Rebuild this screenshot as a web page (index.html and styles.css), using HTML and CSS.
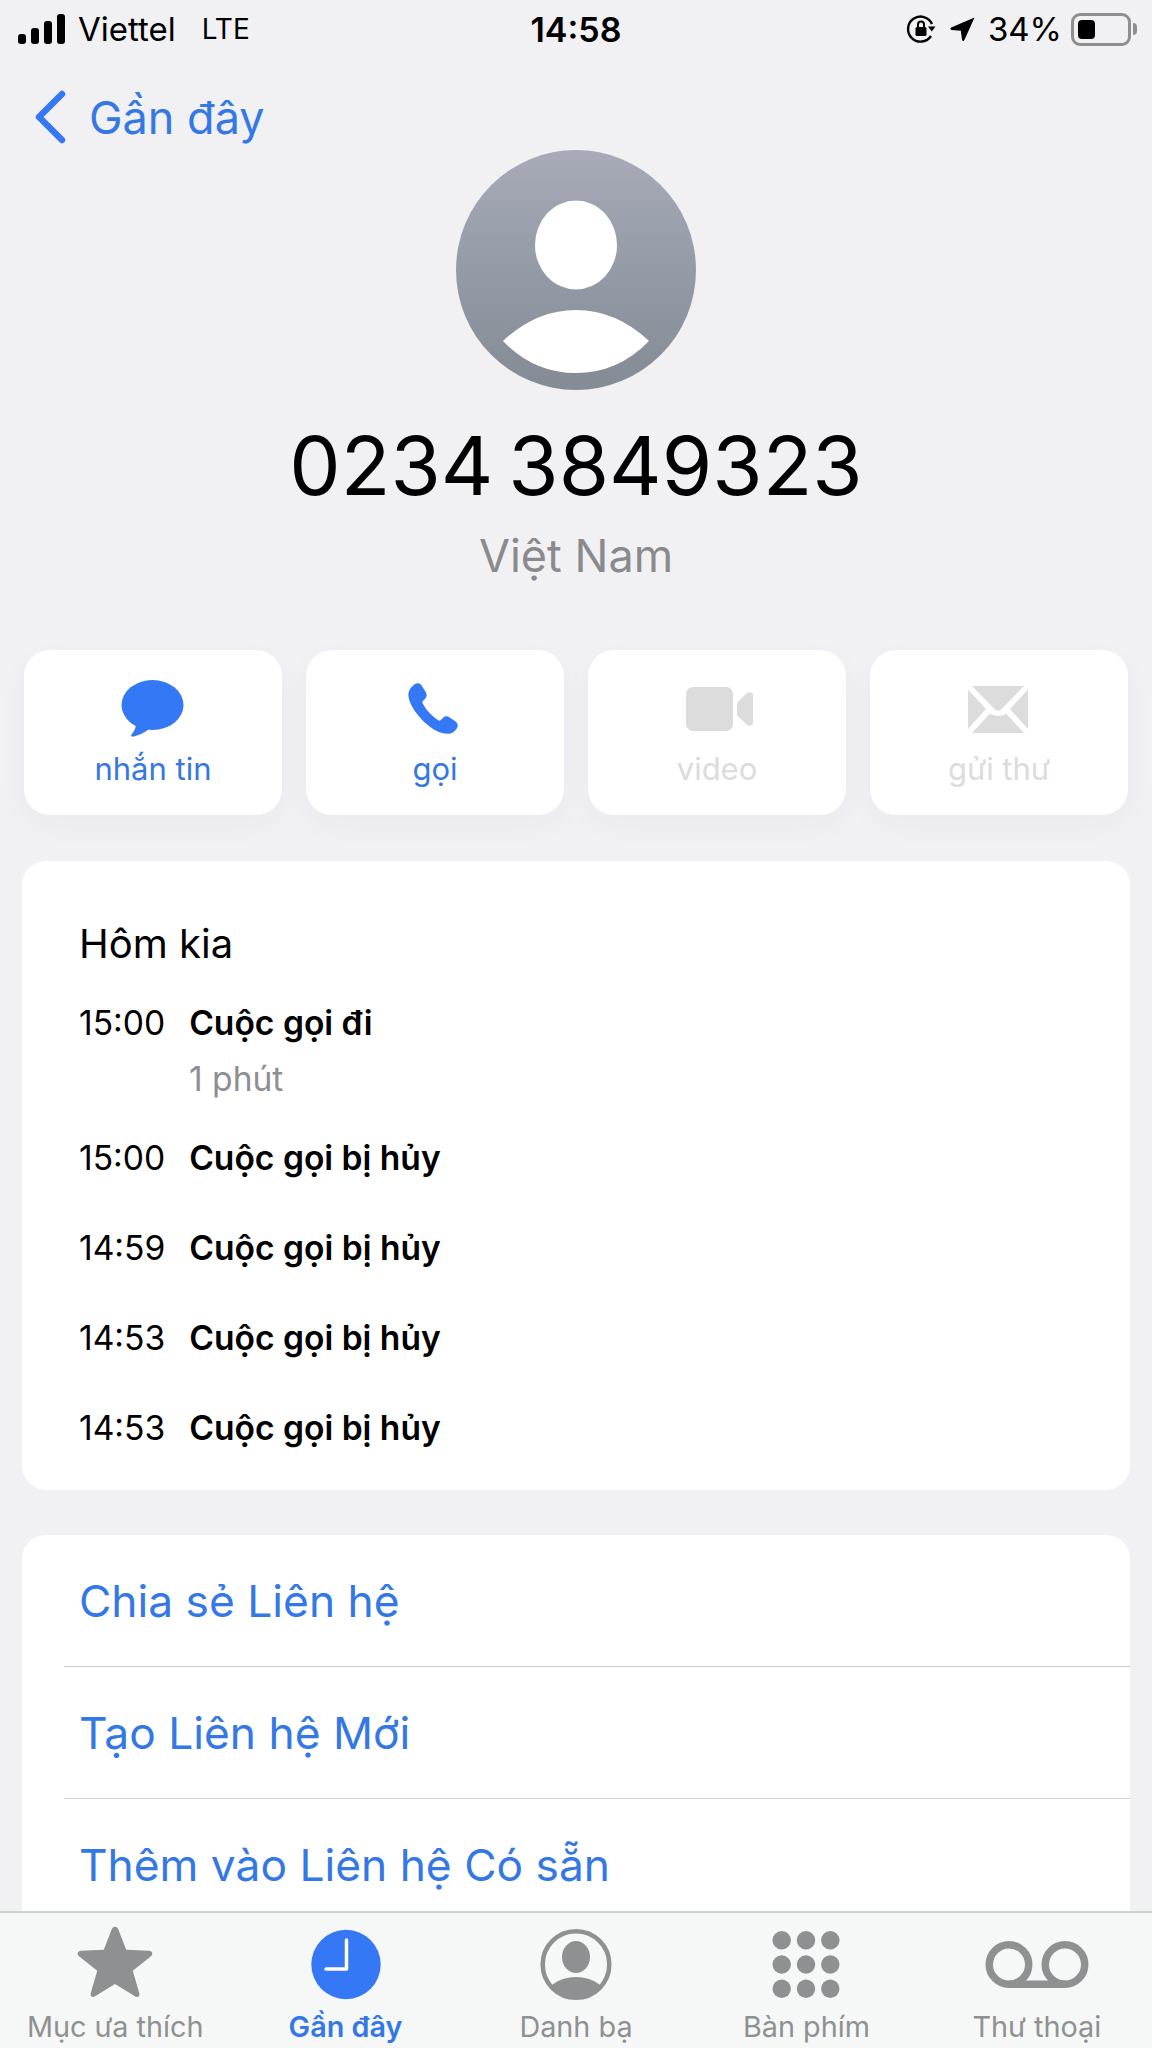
FILE: index.html
```html
<!DOCTYPE html>
<html lang="vi">
<head>
<meta charset="utf-8">
<title>0234 3849323</title>
<link rel="stylesheet" href="styles.css">
</head>
<body>
<div class="page">
  <header class="status">
    <div class="status-left">
      <svg class="signal" viewBox="0 0 48 30"><rect x="0" y="20" width="8" height="10" rx="3"/><rect x="13" y="14" width="8" height="16" rx="3"/><rect x="26" y="7" width="8" height="23" rx="3"/><rect x="39" y="0" width="8" height="30" rx="3"/></svg>
      <span>Viettel</span><span class="lte">LTE</span>
    </div>
    <div class="status-time">14:58</div>
    <div class="status-right">
      <svg class="lock" viewBox="0 0 30 30"><path d="M25 22A12.5 12.5 0 1 1 26 10" fill="none" stroke="#000" stroke-width="2.4"/><path d="M22 12.5h7.5l-3.7 5z"/><rect x="9.500" y="13" width="11" height="9" rx="1.500"/><path d="M12 13v-2.500a3 3 0 0 1 6 0V13" fill="none" stroke="#000" stroke-width="2"/></svg>
      <svg class="arrow" viewBox="0 0 26 26"><path d="M24.500 1.500 14.300 24.300c-.5 1.100-2 .9-2.200-.3l-1.300-9.200-9.200-.9c-1.300-.1-1.600-1.800-.4-2.300z"/></svg>
      <span>34%</span>
      <div class="battery"><div class="battery-fill"></div></div>
      <div class="battery-nub"></div>
    </div>
  </header>

  <nav class="nav">
    <svg class="chevron" viewBox="0 0 34 54"><path d="M29 4 6 27l23 23" fill="none" stroke="#3478f6" stroke-width="6.500" stroke-linecap="round" stroke-linejoin="round"/></svg>
    <span>Gần đây</span>
  </nav>

  <section class="head">
    <svg class="avatar" viewBox="0 0 240 240">
      <defs><linearGradient id="av" x1="0" y1="0" x2="0" y2="1"><stop offset="0" stop-color="#a6abb7"/><stop offset="1" stop-color="#848b95"/></linearGradient></defs>
      <circle cx="120" cy="120" r="120" fill="url(#av)"/>
      <ellipse cx="120" cy="95" rx="41" ry="44.500" fill="#fff"/>
      <path d="M47 191Q80 160 120 160T193 191Q162 223 120 223T47 191z" fill="#fff"/>
    </svg>
    <h1 class="number">0234 3849323</h1>
    <p class="country">Việt Nam</p>
  </section>

  <section class="actions">
    <div class="action">
      <svg class="action-icon" viewBox="0 0 68 64"><ellipse cx="33.500" cy="27" rx="31" ry="25" fill="#3478f6"/><path d="M17 46C17 50 15 54 12.500 56.500 11.500 58 13 59 15 58.500 20 57 25 55 30 51z" fill="#3478f6"/></svg>
      <span class="action-label">nhắn tin</span>
    </div>
    <div class="action">
      <svg class="action-icon" viewBox="0 0 68 64"><g transform="translate(2 1.200) scale(.9 .94)"><path d="M13 5.500c2.500-1.800 6-1.300 7.700 1.200l4.700 7.300c1.400 2.200 1.100 5-.8 6.800l-2.400 2.300c-.8.800-.9 1.900-.3 2.800 4.500 7.500 9.400 12.700 17.300 17.800.9.600 2 .5 2.800-.3l2.600-2.400c1.900-1.700 4.700-2 6.900-.6l7 4.500c2.400 1.600 3.100 4.900 1.400 7.300-2 3-5 5.800-9.100 5.800C31 58.800 6.800 31 6 17.500 5.700 12 9 8.300 13 5.500z" fill="#3478f6"/></g></svg>
      <span class="action-label">gọi</span>
    </div>
    <div class="action is-off">
      <svg class="action-icon" viewBox="0 0 68 64"><rect x="3" y="9" width="47" height="44" rx="7" fill="#dcdcdc"/><path d="M54 26c0-1 .4-1.800 1.100-2.500l9-8.500c1.600-1.400 5.900-.8 5.900 2v28c0 2.800-4.300 3.400-5.900 2l-9-8.500c-.7-.7-1.100-1.500-1.100-2.500z" fill="#dcdcdc"/></svg>
      <span class="action-label">video</span>
    </div>
    <div class="action is-off">
      <svg class="action-icon" viewBox="0 0 68 64"><path d="M7 8h52L36.500 31c-2 2-5 2-7 0zM3 11.500 21 31 3 51zM63 11.500 45 31 63 51zM7 55 25 35.500c4 3 12 3 16 0L59 55z" fill="#dcdcdc"/></svg>
      <span class="action-label">gửi thư</span>
    </div>
  </section>

  <section class="card history">
    <h2 class="day">Hôm kia</h2>
    <div class="call call-first"><span class="time">15:00</span><strong class="kind">Cuộc gọi đi</strong></div>
    <div class="duration">1 phút</div>
    <div class="call"><span class="time">15:00</span><strong class="kind">Cuộc gọi bị hủy</strong></div>
    <div class="call"><span class="time">14:59</span><strong class="kind">Cuộc gọi bị hủy</strong></div>
    <div class="call"><span class="time">14:53</span><strong class="kind">Cuộc gọi bị hủy</strong></div>
    <div class="call"><span class="time">14:53</span><strong class="kind">Cuộc gọi bị hủy</strong></div>
  </section>

  <section class="card links">
    <div class="link">Chia sẻ Liên hệ</div>
    <div class="link">Tạo Liên hệ Mới</div>
    <div class="link">Thêm vào Liên hệ Có sẵn</div>
  </section>

  <footer class="tabbar">
    <div class="tab">
      <svg class="tab-icon" viewBox="-2.750 0 85.500 81.300"><path d="M36.500 3.500c1.500-3.500 5.500-3.500 7 0l8.500 22 24.500 1c3.500.2 4.500 3.700 2 5.800L59 48l7 24c1 3.200-2 5-4.700 3.200L40 62 18.700 75.200C16 77 13 75.200 14 72l7-24L1.500 32.300c-2.500-2.100-1.500-5.600 2-5.800l24.500-1z" fill="#8e9191"/></svg>
      <span>Mục ưa thích</span>
    </div>
    <div class="tab is-active">
      <svg class="tab-icon" viewBox="0 0 80 76"><circle cx="40" cy="38.500" r="34.700" fill="#3478f6"/><path d="M40.500 14v29H20" fill="none" stroke="#fff" stroke-width="3.500" stroke-linecap="round" stroke-linejoin="round"/></svg>
      <span>Gần đây</span>
    </div>
    <div class="tab">
      <svg class="tab-icon" viewBox="0 0 80 76"><defs><clipPath id="cc"><circle cx="40" cy="38.500" r="33"/></clipPath></defs><circle cx="40" cy="38.500" r="33.300" fill="none" stroke="#8e9191" stroke-width="4.500"/><ellipse cx="40" cy="31" rx="14" ry="16" fill="#8e9191"/><ellipse cx="40" cy="75" rx="32" ry="24" fill="#8e9191" clip-path="url(#cc)"/></svg>
      <span>Danh bạ</span>
    </div>
    <div class="tab">
      <svg class="tab-icon" viewBox="0 0 80 76"><g fill="#8e9191"><circle cx="15.700" cy="14.200" r="9.200"/><circle cx="40" cy="14.200" r="9.200"/><circle cx="64.300" cy="14.200" r="9.200"/><circle cx="15.700" cy="38.500" r="9.200"/><circle cx="40" cy="38.500" r="9.200"/><circle cx="64.300" cy="38.500" r="9.200"/><circle cx="15.700" cy="62.800" r="9.200"/><circle cx="40" cy="62.800" r="9.200"/><circle cx="64.300" cy="62.800" r="9.200"/></g></svg>
      <span>Bàn phím</span>
    </div>
    <div class="tab">
      <svg class="tab-icon vm" viewBox="0 0 104 76"><g fill="none" stroke="#8e9191" stroke-width="7.500"><circle cx="24" cy="38.500" r="19.750"/><circle cx="80" cy="38.500" r="19.750"/><path d="M24 58.250h56"/></g></svg>
      <span>Thư thoại</span>
    </div>
  </footer>
</div>
</body>
</html>
```

FILE: styles.css
```css
* { box-sizing: border-box; }
html, body { margin: 0; padding: 0; }
body {
  background: #f1f1f4;
  font-family: Inter, "Noto Sans", "Liberation Sans", sans-serif;
  color: #000;
}
.page {
  position: relative;
  width: 1152px;
  height: 2048px;
  overflow: hidden;
}

/* status bar */
.status {
  position: relative;
  display: flex;
  justify-content: space-between;
  align-items: center;
  height: 58px;
  padding: 0 15px 0 18px;
  font-size: 33px;
}
.status-left, .status-right { display: flex; align-items: center; }
.signal { width: 48px; height: 30px; margin-right: 12px; fill: #000; }
.lte { margin-left: 26px; font-size: 28px; }
.status-time {
  position: absolute;
  left: 0;
  right: 0;
  text-align: center;
  font-weight: 600;
  font-size: 34px;
}
.lock { width: 30px; height: 30px; margin-right: 14px; fill: #000; }
.arrow { width: 26px; height: 26px; margin-right: 12px; fill: #000; }
.battery {
  width: 60px;
  height: 33px;
  margin-left: 9px;
  padding: 4px;
  border: 3px solid #8f8f8f;
  border-radius: 9px;
}
.battery-fill { width: 17px; height: 100%; background: #000; border-radius: 4px; }
.battery-nub {
  width: 4px;
  height: 12px;
  margin-left: 2px;
  background: #8f8f8f;
  border-radius: 0 4px 4px 0;
}

/* navigation */
.nav {
  display: flex;
  align-items: center;
  height: 92px;
  padding: 26px 0 0 33px;
  color: #3478e6;
  font-size: 45px;
}
.chevron { width: 34px; height: 54px; margin-right: 22px; }

/* header */
.head { display: flex; flex-direction: column; align-items: center; }
.avatar { display: block; width: 240px; height: 240px; }
.number {
  margin: 26px 0 0;
  font-size: 81.500px;
  font-weight: 400;
  line-height: 100px;
  word-spacing: -8px;
}
.country {
  margin: 10px 0 0;
  color: #8a8a8e;
  font-size: 45px;
  line-height: 60px;
}

/* action buttons */
.actions {
  display: grid;
  grid-template-columns: repeat(4, 1fr);
  gap: 24px;
  margin-top: 64px;
  padding: 0 24px;
}
.action {
  display: flex;
  flex-direction: column;
  align-items: center;
  height: 165px;
  padding-top: 28px;
  background: #fff;
  border-radius: 26px;
  box-shadow: 0 10px 30px rgba(60, 60, 90, .035);
  color: #3478e0;
}
.action-icon { display: block; width: 68px; height: 64px; overflow: visible; }
.action-label { margin-top: 7px; font-size: 31px; line-height: 40px; }
.is-off { color: #dcdcdc; }

/* cards */
.card {
  width: 1108px;
  margin-left: 22px;
  background: #fff;
  border-radius: 24px;
}
.history { margin-top: 46px; padding: 58px 57px 18px; }
.day { margin: 0 0 28px; font-size: 40px; font-weight: 400; line-height: 50px; }
.call { display: flex; gap: 24px; height: 90px; align-items: center; font-size: 33.600px; }
.call-first { height: 50px; }
.time { font-weight: 400; }
.kind { font-weight: 600; }
.duration {
  height: 50px;
  margin: 7px 0 8px 110px;
  color: #8e8e93;
  font-size: 33.600px;
  line-height: 50px;
}
.links { margin-top: 45px; padding-left: 42px; height: 460px; }
.link {
  display: flex;
  align-items: center;
  height: 132px;
  padding-left: 15px;
  border-bottom: 1px solid #cfcfd2;
  color: #3478e6;
  font-size: 44.300px;
}
.link:last-child { border-bottom: 0; }

/* tab bar */
.tabbar {
  position: absolute;
  left: 0;
  right: 0;
  bottom: 0;
  display: grid;
  grid-template-columns: repeat(5, 1fr);
  height: 137px;
  padding-top: 13px;
  background: #f6f7f7;
  border-top: 2px solid #cfd0d0;
}
.tab {
  display: flex;
  flex-direction: column;
  align-items: center;
  color: #8e9191;
  font-size: 28.800px;
}
.tab-icon { display: block; width: 80px; height: 76px; }
.tab-icon.vm { width: 104px; }
.tab span { margin-top: 6px; line-height: 38px; white-space: nowrap; }
.is-active { color: #3478e6; font-weight: 600; }
```
